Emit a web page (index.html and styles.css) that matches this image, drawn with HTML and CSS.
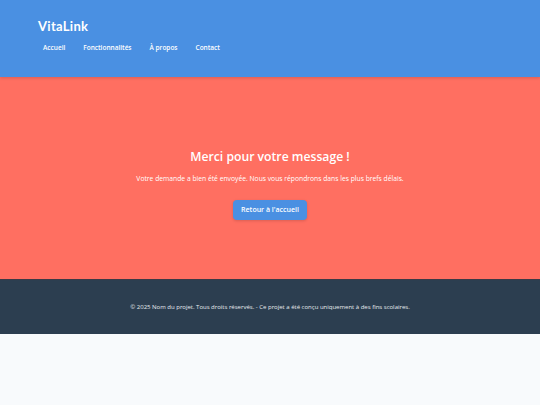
FILE: index.html
```html
<!DOCTYPE html>
<html lang="fr">
<head>
<meta charset="utf-8">
<title>VitaLink</title>
<link rel="stylesheet" href="styles.css">
</head>
<body>
<header class="site-header">
  <div class="logo">VitaLink</div>
  <nav class="nav">
    <a href="#">Accueil</a>
    <a href="#">Fonctionnalités</a>
    <a href="#">À propos</a>
    <a href="#">Contact</a>
  </nav>
</header>
<main class="hero">
  <h1 class="title">Merci pour votre message !</h1>
  <p class="lead">Votre demande a bien été envoyée. Nous vous répondrons dans les plus brefs délais.</p>
  <a class="btn" href="#">Retour à l'accueil</a>
</main>
<footer class="site-footer">
  <p>© 2025 Nom du projet. Tous droits réservés. - Ce projet a été conçu uniquement à des fins scolaires.</p>
</footer>
</body>
</html>
```
FILE: styles.css
```css
* { box-sizing: border-box; }
html, body { margin: 0; padding: 0; }
body {
  background: #f8fafc;
  font-family: "Open Sans", "Noto Sans", sans-serif;
  color: #ffffff;
}
.site-header {
  background: #4a90e2;
  height: 77px;
  padding: 18px 38px 0;
  box-shadow: 0 1px 3px rgba(0,0,0,0.15);
  position: relative;
  z-index: 1;
}
.logo {
  font-family: "Lato", "Open Sans", sans-serif;
  font-weight: 700;
  font-size: 13px;
  line-height: 16px;
  letter-spacing: 0.3px;
}
.nav {
  display: flex;
  gap: 8px;
  margin-top: 6px;
}
.nav a {
  color: #fff;
  text-decoration: none;
  font-size: 6.5px;
  font-weight: 600;
  padding: 3px 5px;
}
.hero {
  background: #ff6f61;
  height: 202px;
  padding-top: 72px;
  display: flex;
  flex-direction: column;
  align-items: center;
  text-align: center;
}
.title {
  margin: 0;
  font-size: 12.2px;
  font-weight: 600;
  line-height: 16px;
}
.lead {
  margin: 9px 0 16px;
  font-size: 6.75px;
  line-height: 10px;
}
.btn {
  display: inline-block;
  background: #4a90e2;
  color: #fff;
  text-decoration: none;
  font-size: 7px;
  font-weight: 600;
  width: 74px;
  height: 20px;
  line-height: 20px;
  border-radius: 4px;
  box-shadow: 0 1px 3px rgba(0,0,0,0.15);
}
.site-footer {
  background: #2c3e50;
  height: 55px;
  display: flex;
  align-items: center;
  justify-content: center;
  border-top: 1px solid #3b3a45;
}
.site-footer p {
  margin: 0;
  font-size: 6px;
  color: #e8ecef;
}
```
